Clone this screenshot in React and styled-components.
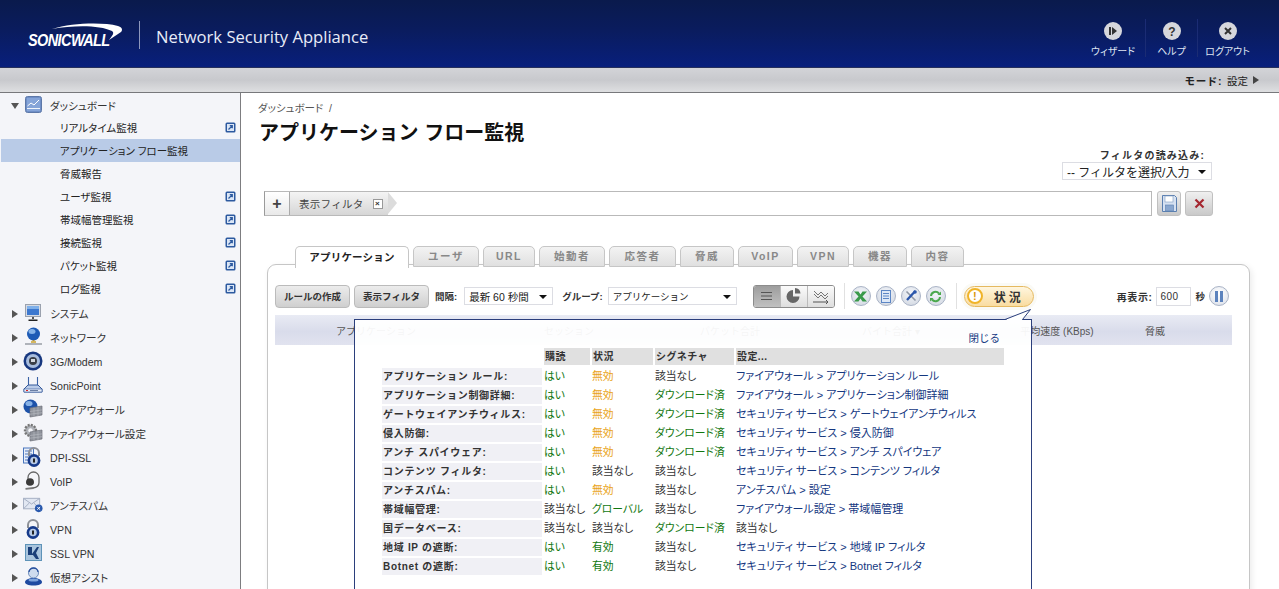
import React from 'react';
import styled, { createGlobalStyle, css } from 'styled-components';

const FONT = `"Liberation Sans", "Noto Sans CJK JP", sans-serif`;
const palt = css`font-feature-settings: "palt" 1;`;

const Global = createGlobalStyle`
  html, body { margin: 0; padding: 0; background: #fff; overflow: hidden; }
  body { font-family: ${FONT}; font-size: 11px; color: #333; }
  * { box-sizing: border-box; }
`;

const Page = styled.div`
  width: 1279px; height: 589px; overflow: hidden; display: flex; flex-direction: column;
`;
const Header = styled.header`
  height: 68px; flex: none; display: flex; align-items: center; justify-content: space-between;
  background: linear-gradient(#0a1a4c 0%, #0a1c5e 45%, #081f7c 100%);
  border-bottom: 1px solid #26305c;
`;
const Brand = styled.div`display: flex; align-items: center; padding: 3px 0 0 28px;`;
const Logo = styled.div`
  position: relative; width: 94px; height: 28px; margin-right: 17px;
  color: #fff; font: italic 700 14.5px/1 "Liberation Sans", sans-serif;
  letter-spacing: -0.6px;
`;
const LogoWord = styled.span`position: absolute; left: 0; top: 13px; transform: scaleY(1.1);`;
const LogoSwoosh = styled.svg`position: absolute; left: 22px; top: 2px;`;
const Divider = styled.div`width: 1px; height: 28px; background: #8d97bd; margin-right: 16px;`;
const Product = styled.div`color: #e8ecf7; font: 400 16.6px "Open Sans", sans-serif; margin-top: 3px;`;
const HeadNav = styled.nav`display: flex; padding: 14px 22px 0 0; align-self: flex-start;`;
const HeadItem = styled.div`
  ${palt}
  display: flex; flex-direction: column; align-items: center; gap: 5px; height: 38px; width: ${p => p.$w}px; margin-top: 5px;
  padding: 3px ${p => p.$pr || 0}px 0 0; color: #dfe4f2; font-size: 10px; line-height: 14px; white-space: nowrap;
  border-left: ${p => (p.$sep ? '1px solid #1b2c74' : 'none')};
  & > svg { flex: none; }
`;
const ModeBar = styled.div`
  height: 25px; flex: none; display: flex; align-items: center; justify-content: flex-end; gap: 5px; padding-right: 20px;
  background: linear-gradient(#d3d4d8, #c8c9cd 50%, #dedfe1);
  border-bottom: 1px solid #77787b; font-size: 10.5px; color: #222;
`;
const ModeLabel = styled.b`font-weight: 700; letter-spacing: .6px;`;
const ModeArrow = styled.i`
  width: 0; height: 0; border-left: 6px solid #444; border-top: 4px solid transparent; border-bottom: 4px solid transparent;
`;
const Body = styled.div`flex: 1; display: flex; min-height: 0;`;
const Side = styled.aside`
  width: 241px; flex: none; background: #f4f5f9; border-right: 1px solid #7d7d80; overflow: hidden;
`;
const TopRow = styled.div`
  ${palt}
  height: ${p => p.$h || 24}px; padding-top: ${p => p.$pt || 0}px; display: flex; align-items: center; color: #333; font-size: 10.6px;
`;
const SubGroup = styled.div`margin-bottom: 1.5px;`;
const Caret = styled.i`
  width: 0; height: 0; flex: none; margin-left: 12px; margin-right: 5px;
  border-left: 6px solid #555; border-top: 4.5px solid transparent; border-bottom: 4.5px solid transparent;
`;
const CaretDown = styled.i`
  width: 0; height: 0; flex: none; margin-left: 11px; margin-right: 4px;
  border-top: 6px solid #555; border-left: 4.5px solid transparent; border-right: 4.5px solid transparent;
`;
const TopIcon = styled.span`width: 20px; height: 20px; flex: none; display: flex; align-items: center; justify-content: center; margin: -2px 7px 0 0;`;
const Sub = styled.div`
  ${palt}
  height: 23px; display: flex; align-items: center; justify-content: space-between; padding: 0 4px 0 59px; margin-left: 1px;
  font-size: 10.5px; color: #222;
  background: ${p => (p.$active ? '#b9cbe7' : 'transparent')};
`;
const Main = styled.main`flex: 1; position: relative; padding: 9px 30px 0 18px; min-width: 0;`;
const Crumb = styled.div`${palt} font-size: 10.5px; color: #555; height: 13px; line-height: 13px; margin-left: -1px;`;
const Title = styled.h1`margin: 4px 0 0 0; font-size: 20px; line-height: 28px; font-weight: 700; color: #111;`;
const LoadBlock = styled.div`
  display: flex; flex-direction: column; align-items: flex-end; margin: 3px 37px 0 0;
`;
const LoadLabel = styled.div`font-size: 10px; font-weight: 700; color: #333; margin-right: 7px; letter-spacing: 1.2px; line-height: 12px;`;
const Select = styled.div`
  width: ${p => p.$w}px; height: ${p => p.$h || 18}px; display: flex; align-items: center; justify-content: space-between;
  background: #fff; border: 1px solid #dcdde3; padding: 0 5px 0 4px; color: #222; white-space: nowrap;
  font-size: ${p => p.$fs || 10}px; flex: none;
`;
const SelCaret = styled.i`
  width: 0; height: 0; flex: none; border-top: 4px solid #111; border-left: 4px solid transparent; border-right: 4px solid transparent; margin-top: 2px;
`;
const FilterRow = styled.div`display: flex; align-items: center; margin: 11px 0 0 5px; gap: 4px;`;
const FilterBar = styled.div`
  width: 888px; height: 25px; margin-right: 1px; display: flex; align-items: stretch; background: #fff; border: 1px solid #b9b9b9; border-left-color: #9a9a9a;
`;
const PlusCell = styled.div`
  width: 25px; display: flex; align-items: center; justify-content: center; font: 700 16px/1 "Liberation Sans"; color: #444;
  background: linear-gradient(#fff, #e9e9e9); border-right: 1px solid #aaa;
`;
const Crumbtag = styled.div`
  position: relative; width: 98px; display: flex; align-items: center; gap: 9px; padding-left: 9px;
  background: linear-gradient(#f4f4f4, #d6d6d6); color: #444; font-size: 10.5px; letter-spacing: .3px;
  &::after { content: ''; position: absolute; left: 100%; top: 0; width: 0; height: 0;
    border-left: 9px solid #dcdcdc; border-top: 11.5px solid transparent; border-bottom: 11.5px solid transparent; }
`;
const TagX = styled.span`
  width: 10px; height: 10px; border: 1px solid #999; background: #fff; font: 700 8px/8px "Liberation Sans"; text-align: center; color: #333;
`;
const IconBtn = styled.div`
  width: ${p => p.$w || 24}px; height: 25px; border-radius: 3px; display: flex; align-items: center; justify-content: center;
  background: linear-gradient(#f0f0f0, #c9c9c9); border: 1px solid #c0c0c0;
`;
const TabsRow = styled.div`display: flex; margin: 30px 0 0 36px; height: 22px; position: relative; z-index: 1; gap: 4px;`;
const Tab = styled.div`
  width: ${p => p.$w}px; height: ${p => (p.$active ? 22 : 21)}px; padding-bottom: 2px; display: flex; align-items: center; justify-content: center; border-radius: 5px 5px 0 0;
  border: 1px solid #c6c6c6; font-weight: 700; font-size: 10.5px; letter-spacing: ${p => (p.$active ? 0.2 : 1.5)}px;
  color: ${p => (p.$active ? '#222' : '#888')};
  background: ${p => (p.$active ? '#fff' : 'linear-gradient(#f3f3f3, #e0e0e0)')};
  border-bottom: ${p => (p.$active ? 'none' : '1px solid #c6c6c6')};
`;
const Panel = styled.section`
  margin: -4px 0 0 8px; width: 983px; height: 330px; background: #fff; border: 1px solid #c6c6c6; border-radius: 9px 9px 0 0;
  padding: 19px 16px 0 7px; box-shadow: 2px 2px 6px rgba(0,0,0,.08); position: relative;
`;
const Toolbar = styled.div`display: flex; align-items: center; height: 24px; position: relative;`;
const GrayBtn = styled.div`
  width: 75px; height: 23px; margin-right: 4px; display: flex; align-items: center; justify-content: center; flex: none; white-space: nowrap;
  background: linear-gradient(#ececec, #cfcfcf); border: 1px solid #bbb; border-radius: 4px; font-size: 9.5px; font-weight: 700; color: #333;
`;
const ToolLabel = styled.b`font-size: ${p => p.$fs || 9.5}px; letter-spacing: ${p => p.$ls || 0}px; color: #333; margin: 0 ${p => p.$mr ?? 4}px 0 ${p => p.$ml || 0}px; white-space: nowrap;`;
const ViewGroup = styled.div`
  display: flex; width: 82px; height: 23px; margin-left: 16px; border: 1px solid #8c8c8c; border-radius: 3px; overflow: hidden; flex: none;
`;
const ViewCell = styled.div`
  flex: 1; display: flex; align-items: center; justify-content: center;
  background: ${p => (p.$on ? 'linear-gradient(#9d9d9d,#c0c0c0)' : 'linear-gradient(#fbfbfb,#dedede)')};
  & + & { border-left: 1px solid #bbb; }
`;
const Sep = styled.div`width: 1px; height: 26px; background: #e1e1e1; margin: 0 ${p => p.$r}px 0 ${p => p.$l}px; flex: none;`;
const Round = styled.div`
  width: 20px; height: 20px; border-radius: 50%; flex: none; margin-right: 5px; display: flex; align-items: center; justify-content: center;
  background: radial-gradient(circle at 50% 35%, #f4f6fa, #cfd5df); border: 1px solid #a9b3c6;
`;
const StatusBtn = styled.div`
  width: 70px; height: 21px; flex: none; border-radius: 11px; display: flex; align-items: center; gap: 11px; padding-left: 2px;
  background: linear-gradient(#fff6df, #f9dca0); border: 1px solid #e5b960; font-weight: 700; font-size: 12px; color: #333; letter-spacing: 3px; white-space: nowrap;
  box-shadow: 0 0 0 3px #fafaf6;
`;
const Excl = styled.span`
  width: 16px; height: 16px; border-radius: 50%; background: #fff; border: 2px solid #f0b429; color: #d9980f; display: flex; align-items: center; justify-content: center;
  font: 700 11px/1 "Liberation Sans"; letter-spacing: 0;
`;
const Refresh = styled.div`margin-left: auto; display: flex; align-items: center; gap: 4px; padding-right: 4px; flex: none;`;
const RefInput = styled.div`width: 35px; height: 19px; border: 1px solid #dcdde3; padding-left: 3px; line-height: 17px; font-size: 10px; color: #333; letter-spacing: .5px; background: #fff;`;
const Pause = styled.div`
  width: 20px; height: 20px; border-radius: 50%; display: flex; align-items: center; justify-content: center; gap: 2px;
  background: radial-gradient(circle at 50% 35%, #fff, #d9dee8); border: 1px solid #a9b3c6;
  &::before, &::after { content: ''; width: 3px; height: 11px; background: #5b82bd; }
`;
const GridHead = styled.div`
  position: relative; margin-top: 7px; height: 30px; width: 957px; display: grid;
  grid-template-columns: 202px 184px 138px 184px 148px 48px 53px; align-items: center; font-size: 10px; color: #555; text-align: center;
  white-space: nowrap; background: linear-gradient(#e9ebf4, #d9dceb 55%, #e1e3ef);
`;
const Popup = styled.div`
  position: absolute; left: 86px; top: 54px; width: 678px; height: 280px; background: rgba(255,255,255,.94);
  border: 1px solid #2b3f7c; border-top: 1.5px solid #2b3f7c; padding: 11px 27px 0 27px;
`;
const Tail = styled.svg`position: absolute; right: -1px; top: -11.5px;`;
const Close = styled.div`text-align: right; color: #12367f; font-size: 10.5px; height: 17px; line-height: 15px; padding-right: 4px;`;
const StatusTable = styled.div`
  display: grid; grid-template-columns: 160px 46px 61px 79px 268px; column-gap: 2px; row-gap: 2px; width: 622px; font-size: 10px; line-height: 17px;
`;
const Th = styled.div`background: ${p => (p.$blank ? 'transparent' : '#e0e0e0')}; font-weight: 700; color: #333; padding-left: 1px; letter-spacing: .4px; white-space: nowrap; margin-bottom: 1px;`;
const RowLabel = styled.div`background: #f0f0f5; font-weight: 700; color: #333; padding-left: 1px; white-space: nowrap; letter-spacing: .7px;`;
const Cell = styled.div`
  ${palt}
  font-size: ${p => (p.$k === 'link' ? 11 : 10.8)}px; white-space: nowrap;
  color: ${p => ({ ok: '#11770f', warn: '#e9a316', none: '#333', link: '#14377f' }[p.$k])};
`;

const ExtLink = () => (
  <svg width="11" height="11" viewBox="0 0 11 11">
    <rect x=".5" y=".5" width="10" height="10" rx="1.5" fill="#2d5aa0" />
    <rect x="2" y="2" width="7" height="7" fill="#dbe6f6" />
    <path d="M3.5 7.5 7 4M4.8 3.7H7.3V6.2" stroke="#2d5aa0" strokeWidth="1.2" fill="none" />
  </svg>
);

const IconDash = () => (
  <svg width="17" height="17" viewBox="0 0 17 17">
    <rect x=".5" y=".5" width="16" height="16" rx="2" fill="#6f8fc7" stroke="#5d78a8" />
    <rect x="2" y="2" width="13" height="13" fill="#85a4d8" />
    <path d="M2.5 10 6 7l3 2 5-5" stroke="#fff" fill="none" />
    <path d="M2 12.5h13" stroke="#f1f5fb" />
  </svg>
);
const IconMonitor = () => (
  <svg width="17" height="18" viewBox="0 0 17 18">
    <rect x=".5" y=".5" width="15" height="12" fill="#d7dbe3" stroke="#9aa1ae" />
    <rect x="2" y="2" width="12" height="9" fill="#3d78cf" />
    <rect x="2" y="2" width="12" height="3" fill="#7fb0ea" />
    <path d="M7 13h2v2H7z" fill="#555" />
    <path d="M3.5 15.5h9v1.5h-9z" fill="#222" />
  </svg>
);
const IconNet = () => (
  <svg width="19" height="19" viewBox="0 0 19 19">
    <circle cx="9.5" cy="7" r="6.5" fill="#1e5bb5" />
    <ellipse cx="8" cy="4.5" rx="3.5" ry="2.5" fill="#85b3e8" />
    <path d="M9.5 13v3" stroke="#b0923b" strokeWidth="2" />
    <path d="M7 14h5v2H7z" fill="#d5b75f" />
    <path d="M1 17h17" stroke="#8a8f98" strokeWidth="1.3" />
  </svg>
);
const IconModem = () => (
  <svg width="20" height="20" viewBox="0 0 20 20">
    <circle cx="10" cy="10" r="9.5" fill="#17377f" />
    <circle cx="10" cy="10" r="7" fill="#a8bdde" />
    <circle cx="10" cy="10" r="4" fill="#3a3f48" />
    <rect x="8" y="8" width="4" height="3" fill="#d5d9e0" />
  </svg>
);
const IconRouter = () => (
  <svg width="20" height="18" viewBox="0 0 20 18">
    <path d="M5.5 1v8M14.5 1v8" stroke="#3a62a5" strokeWidth="1.1" />
    <path d="M1 16v-3l4-4h10l4 4v3z" fill="#b9cbe8" stroke="#33589a" />
    <rect x="1" y="13" width="18" height="3" fill="#e8eef8" stroke="#33589a" strokeWidth=".6" />
    <path d="M3 14.5h2" stroke="#d22" />
    <path d="M7 14.5h8" stroke="#6b7fa5" />
  </svg>
);
const IconFirewall = () => (
  <svg width="20" height="19" viewBox="0 0 20 19">
    <circle cx="7.5" cy="7.5" r="7" fill="#1d52a9" />
    <ellipse cx="6" cy="4.5" rx="3.5" ry="2.6" fill="#87b1e6" />
    <path d="M7 9l12-2v9L7 18z" fill="#8f939b" stroke="#6d7078" strokeWidth=".7" />
    <path d="M7 12.5l12-1.6M7 15.2l12-1.5M11 8.5v9M15 8v9" stroke="#b9bcc2" strokeWidth=".6" />
  </svg>
);
const IconFwGear = () => (
  <svg width="20" height="19" viewBox="0 0 20 19">
    <circle cx="7.5" cy="7.5" r="5.5" fill="#aeb1b7" stroke="#777" strokeDasharray="2 1.2" strokeWidth="2.4" />
    <circle cx="7.5" cy="7.5" r="2.2" fill="#f4f5f9" />
    <path d="M7 9l12-2v9L7 18z" fill="#8f939b" stroke="#6d7078" strokeWidth=".7" />
    <path d="M7 12.5l12-1.6M7 15.2l12-1.5M11 8.5v9M15 8v9" stroke="#b9bcc2" strokeWidth=".6" />
  </svg>
);
const LockShape = ({ cx = 10 }) => (
  <>
    <path d={`M${cx - 5} 9V6a5 5 0 0 1 10 0v3`} fill="none" stroke="#8d9097" strokeWidth="2" />
    <circle cx={cx} cy="13.5" r="6.4" fill="#163a8a" />
    <circle cx={cx} cy="13.5" r="3.8" fill="#b9cbe6" />
    <rect x={cx - 1} y="11.5" width="2" height="4" fill="#222" />
  </>
);
const IconDpi = () => (
  <svg width="20" height="20" viewBox="0 0 20 20">
    <rect x=".5" y="1" width="10" height="15" fill="#e8eef9" stroke="#4a76bd" />
    <path d="M2 4h7M2 7h7M2 10h7M2 13h7" stroke="#4a76bd" />
    <g transform="translate(3 0)"><LockShape cx={8} /></g>
  </svg>
);
const IconVoip = () => (
  <svg width="18" height="20" viewBox="0 0 18 20">
    <path d="M4 9V6.500a5.500 5.500 0 0 1 11 0v5c0 3.500-2 5-6 5.500" fill="none" stroke="#666" strokeWidth="1.300" />
    <ellipse cx="6" cy="11" rx="4" ry="3.800" fill="#3a3a3a" />
    <path d="M1.500 17.800l8-.8" stroke="#777" strokeWidth="1.800" />
  </svg>
);
const IconMail = () => (
  <svg width="21" height="16" viewBox="0 0 21 16">
    <path d="M.5 1h17v11H.5z" fill="#e1e7f2" stroke="#a2adc1" />
    <path d="M.5 1l8.500 6 8.500-6M.5 12l6-6M17.500 12l-6-6" fill="none" stroke="#a2adc1" />
    <circle cx="16.500" cy="11.500" r="4" fill="#2858ad" />
    <path d="M15 10l3 3M18 10l-3 3" stroke="#fff" strokeWidth="1" />
  </svg>
);
const IconLock = () => (
  <svg width="20" height="20" viewBox="0 0 20 20"><LockShape /></svg>
);
const IconSsl = () => (
  <svg width="17" height="17" viewBox="0 0 17 17">
    <rect x=".5" y=".5" width="16" height="16" fill="#a9c4dd" stroke="#5e93b8" />
    <path d="M3 3h4v7l5-7h2l-3 6 3 6h-3l-3-4H3z" fill="#1a3e78" />
  </svg>
);
const IconAssist = () => (
  <svg width="19" height="19" viewBox="0 0 19 19">
    <circle cx="9.500" cy="6" r="5" fill="#cfdcee" stroke="#6f8ebc" />
    <path d="M5 5a4.500 4 0 0 1 9 0" fill="none" stroke="#264f9e" strokeWidth="1.300" />
    <path d="M1 15c0-2 4-4 8.500-4s8.500 2 8.500 4-3 3.500-8.500 3.500S1 17 1 15z" fill="#1e4aa0" />
    <ellipse cx="9.500" cy="13" rx="5" ry="1.500" fill="#7ea4dc" />
  </svg>
);

const subs = [
  ['リアルタイム監視', true], ['アプリケーション フロー監視', false, true], ['脅威報告'], ['ユーザ監視', true],
  ['帯域幅管理監視', true], ['接続監視', true], ['パケット監視', true], ['ログ監視', true],
];
const tops = [
  ['システム', IconMonitor], ['ネットワーク', IconNet], ['3G/Modem', IconModem], ['SonicPoint', IconRouter],
  ['ファイアウォール', IconFirewall], ['ファイアウォール設定', IconFwGear], ['DPI-SSL', IconDpi], ['VoIP', IconVoip],
  ['アンチスパム', IconMail], ['VPN', IconLock], ['SSL VPN', IconSsl], ['仮想アシスト', IconAssist],
];
const tabs = [
  ['アプリケーション', 114, true], ['ユーザ', 66], ['URL', 52], ['始動者', 66], ['応答者', 67], ['脅威', 54],
  ['VoIP', 55], ['VPN', 52], ['機器', 54], ['内容', 53],
];
const A = 'ファイアウォール > ', S = 'セキュリティ サービス > ';
const rows = [
  ['アプリケーション ルール:', ['はい', 'ok'], ['無効', 'warn'], ['該当なし', 'none'], [A + 'アプリケーション ルール', 'link']],
  ['アプリケーション制御詳細:', ['はい', 'ok'], ['無効', 'warn'], ['ダウンロード済', 'ok'], [A + 'アプリケーション制御詳細', 'link']],
  ['ゲートウェイアンチウィルス:', ['はい', 'ok'], ['無効', 'warn'], ['ダウンロード済', 'ok'], [S + 'ゲートウェイアンチウィルス', 'link']],
  ['侵入防御:', ['はい', 'ok'], ['無効', 'warn'], ['ダウンロード済', 'ok'], [S + '侵入防御', 'link']],
  ['アンチ スパイウェア:', ['はい', 'ok'], ['無効', 'warn'], ['ダウンロード済', 'ok'], [S + 'アンチ スパイウェア', 'link']],
  ['コンテンツ フィルタ:', ['はい', 'ok'], ['該当なし', 'none'], ['該当なし', 'none'], [S + 'コンテンツ フィルタ', 'link']],
  ['アンチスパム:', ['はい', 'ok'], ['無効', 'warn'], ['該当なし', 'none'], ['アンチスパム > 設定', 'link']],
  ['帯域幅管理:', ['該当なし', 'none'], ['グローバル', 'ok'], ['該当なし', 'none'], ['ファイアウォール設定 > 帯域幅管理', 'link']],
  ['国データベース:', ['該当なし', 'none'], ['該当なし', 'none'], ['ダウンロード済', 'ok'], ['該当なし', 'none']],
  ['地域 IP の遮断:', ['はい', 'ok'], ['有効', 'ok'], ['該当なし', 'none'], [S + '地域 IP フィルタ', 'link']],
  ['Botnet の遮断:', ['はい', 'ok'], ['有効', 'ok'], ['該当なし', 'none'], [S + 'Botnet フィルタ', 'link']],
];

export default function App() {
  return (
    <Page>
      <Global />
      <Header>
        <Brand>
          <Logo>
            <LogoSwoosh width="74" height="20" viewBox="0 0 74 20">
              <path d="M2 6C22 0 52-1 68 3c4 1 5 4 3 6l-12 8c3-4 6-7 3-9C50 2 24 2 2 6z" fill="#fff" />
            </LogoSwoosh>
            <LogoWord>SONICWALL</LogoWord>
          </Logo>
          <Divider />
          <Product>Network Security Appliance</Product>
        </Brand>
        <HeadNav>
          <HeadItem $w={58} $pr={6}>
            <svg width="18" height="18" viewBox="0 0 18 18"><circle cx="9" cy="9" r="9" fill="#d6d7dc" /><rect x="5" y="5" width="2" height="8" fill="#333" /><path d="M8 5l5 4-5 4z" fill="#333" /></svg>
            ウィザード
          </HeadItem>
          <HeadItem $w={52} $sep>
            <svg width="18" height="18" viewBox="0 0 18 18"><circle cx="9" cy="9" r="9" fill="#d6d7dc" /><text x="9" y="13.500" textAnchor="middle" fontSize="12" fontWeight="700" fontFamily="Liberation Sans" fill="#333">?</text></svg>
            ヘルプ
          </HeadItem>
          <HeadItem $w={60} $sep>
            <svg width="18" height="18" viewBox="0 0 18 18"><circle cx="9" cy="9" r="9" fill="#d6d7dc" /><path d="M6 6l6 6M12 6l-6 6" stroke="#333" strokeWidth="2" /></svg>
            ログアウト
          </HeadItem>
        </HeadNav>
      </Header>
      <ModeBar><ModeLabel>モード:</ModeLabel> 設定 <ModeArrow /></ModeBar>
      <Body>
        <Side>
          <TopRow $h={23} $pt={2}><CaretDown /><TopIcon><IconDash /></TopIcon>ダッシュボード</TopRow>
          <SubGroup>
            {subs.map(([t, ext, act]) => (
              <Sub key={t} $active={act}>{t}{ext && <ExtLink />}</Sub>
            ))}
          </SubGroup>
          {tops.map(([t, I]) => (
            <TopRow key={t}><Caret /><TopIcon><I /></TopIcon>{t}</TopRow>
          ))}
        </Side>
        <Main>
          <Crumb>ダッシュボード&nbsp;&nbsp;/</Crumb>
          <Title>アプリケーション フロー監視</Title>
          <LoadBlock>
            <LoadLabel>フィルタの読み込み:</LoadLabel>
            <Select $w={150} $fs={12}>-- フィルタを選択/入力<SelCaret /></Select>
          </LoadBlock>
          <FilterRow>
            <FilterBar>
              <PlusCell>+</PlusCell>
              <Crumbtag>表示フィルタ<TagX>×</TagX></Crumbtag>
            </FilterBar>
            <IconBtn>
              <svg width="15" height="17" viewBox="0 0 15 17"><path d="M.5.500h12l2 2v14H.5z" fill="#d6e1f1" stroke="#5a7fb0" /><rect x="3" y="1" width="8" height="6" fill="#fff" stroke="#7d99c0" strokeWidth=".6" /><rect x="3.500" y="10" width="8" height="6" fill="#8aa7cf" stroke="#5a7fb0" strokeWidth=".6" /></svg>
            </IconBtn>
            <IconBtn $w={28}>
              <svg width="11" height="11" viewBox="0 0 11 11"><path d="M1.500 1.500l8 8M9.500 1.500l-8 8" stroke="#a5262f" strokeWidth="2.200" /></svg>
            </IconBtn>
          </FilterRow>
          <TabsRow>
            {tabs.map(([t, w, a]) => <Tab key={t} $w={w} $active={a}>{t}</Tab>)}
          </TabsRow>
          <Panel>
            <Toolbar>
              <GrayBtn>ルールの作成</GrayBtn>
              <GrayBtn>表示フィルタ</GrayBtn>
              <ToolLabel $ml={2} $mr={7}>間隔:</ToolLabel>
              <Select $w={89} $fs={10.500}>最新 60 秒間<SelCaret /></Select>
              <ToolLabel $ml={9} $mr={5}>グループ:</ToolLabel>
              <Select $w={129} $fs={9.500}>アプリケーション<SelCaret /></Select>
              <ViewGroup>
                <ViewCell $on>
                  <svg width="13" height="10" viewBox="0 0 13 10"><path d="M1 1.500h11M1 5h11M1 8.500h11" stroke="#555" /></svg>
                </ViewCell>
                <ViewCell>
                  <svg width="17" height="16" viewBox="0 0 17 16"><path d="M8 2a6.500 6.500 0 1 0 6.500 6.500H8z" fill="#666" /><path d="M10 0v5.500h5.500A6 6 0 0 0 10 0z" fill="#666" /></svg>
                </ViewCell>
                <ViewCell>
                  <svg width="18" height="15" viewBox="0 0 18 15"><path d="M2 2l4 4 3-3 4 4 3-3M2 5l4 4 3-3 4 4 3-3" stroke="#666" fill="none" strokeWidth=".9" /><path d="M1 13h15M14 11l2 2-2 2" stroke="#555" fill="none" /></svg>
                </ViewCell>
              </ViewGroup>
              <Sep $l={9} $r={6} />
              <Round>
                <svg width="13" height="11" viewBox="0 0 13 11"><path d="M0 .5h4.500L6.500 3.500 8.500.5H13L8.500 5.500 13 10.500H8.500L6.500 7.500 4.500 10.500H0l4.500-5z" fill="#3a9a4c" /></svg>
              </Round>
              <Round>
                <svg width="10" height="13" viewBox="0 0 10 13"><rect x=".5" y=".5" width="9" height="12" fill="#dde8f7" stroke="#5c86c5" /><path d="M2 3.500h6M2 6h6M2 8.500h6" stroke="#5c86c5" /></svg>
              </Round>
              <Round>
                <svg width="14" height="14" viewBox="0 0 14 14"><path d="M2.500 2.500l9 9" stroke="#8f97a5" strokeWidth="1.600" /><path d="M11.500 2 9 4.500M9 4.500 3 11" stroke="#2a56ab" strokeWidth="2.400" /><circle cx="11" cy="3" r="1.800" fill="#2a56ab" /></svg>
              </Round>
              <Round>
                <svg width="13" height="13" viewBox="0 0 13 13"><path d="M2 6a4.500 4.500 0 0 1 8-2.500M11 7a4.500 4.500 0 0 1-8 2.500" stroke="#4aa84d" strokeWidth="2" fill="none" /><path d="M8.500 5h3.500V1.500zM4.500 8H1v3.500z" fill="#4aa84d" /></svg>
              </Round>
              <Sep $l={5} $r={7} />
              <StatusBtn><Excl>!</Excl>状況</StatusBtn>
              <Refresh>
                <ToolLabel $mr={0} $fs={10} $ls={0.6}>再表示:</ToolLabel>
                <RefInput>600</RefInput>
                <ToolLabel $mr={0}>秒</ToolLabel>
                <Pause />
              </Refresh>
            </Toolbar>
            <GridHead>
              <span>アプリケーション</span>
              <span>セッション</span>
              <span>パケット合計</span>
              <span>バイト合計 ▾</span>
              <span>平均速度 (KBps)</span>
              <span>脅威</span>
              <span />
            </GridHead>
            <Popup>
              <Tail width="27" height="11" viewBox="0 0 27 11"><path d="M0 10.500 25.500.5 17.500 10.500" fill="#fff" stroke="#2b3f7c" /><path d="M2 11h15" stroke="#fff" strokeWidth="2" /></Tail>
              <Close>閉じる</Close>
              <StatusTable>
                <Th $blank />
                <Th>購読</Th>
                <Th>状況</Th>
                <Th>シグネチャ</Th>
                <Th>設定...</Th>
                {rows.map(([l, ...cs]) => (
                  <React.Fragment key={l}>
                    <RowLabel>{l}</RowLabel>
                    {cs.map(([t, k], i) => <Cell key={i} $k={k}>{t}</Cell>)}
                  </React.Fragment>
                ))}
              </StatusTable>
            </Popup>
          </Panel>
        </Main>
      </Body>
    </Page>
  );
}
